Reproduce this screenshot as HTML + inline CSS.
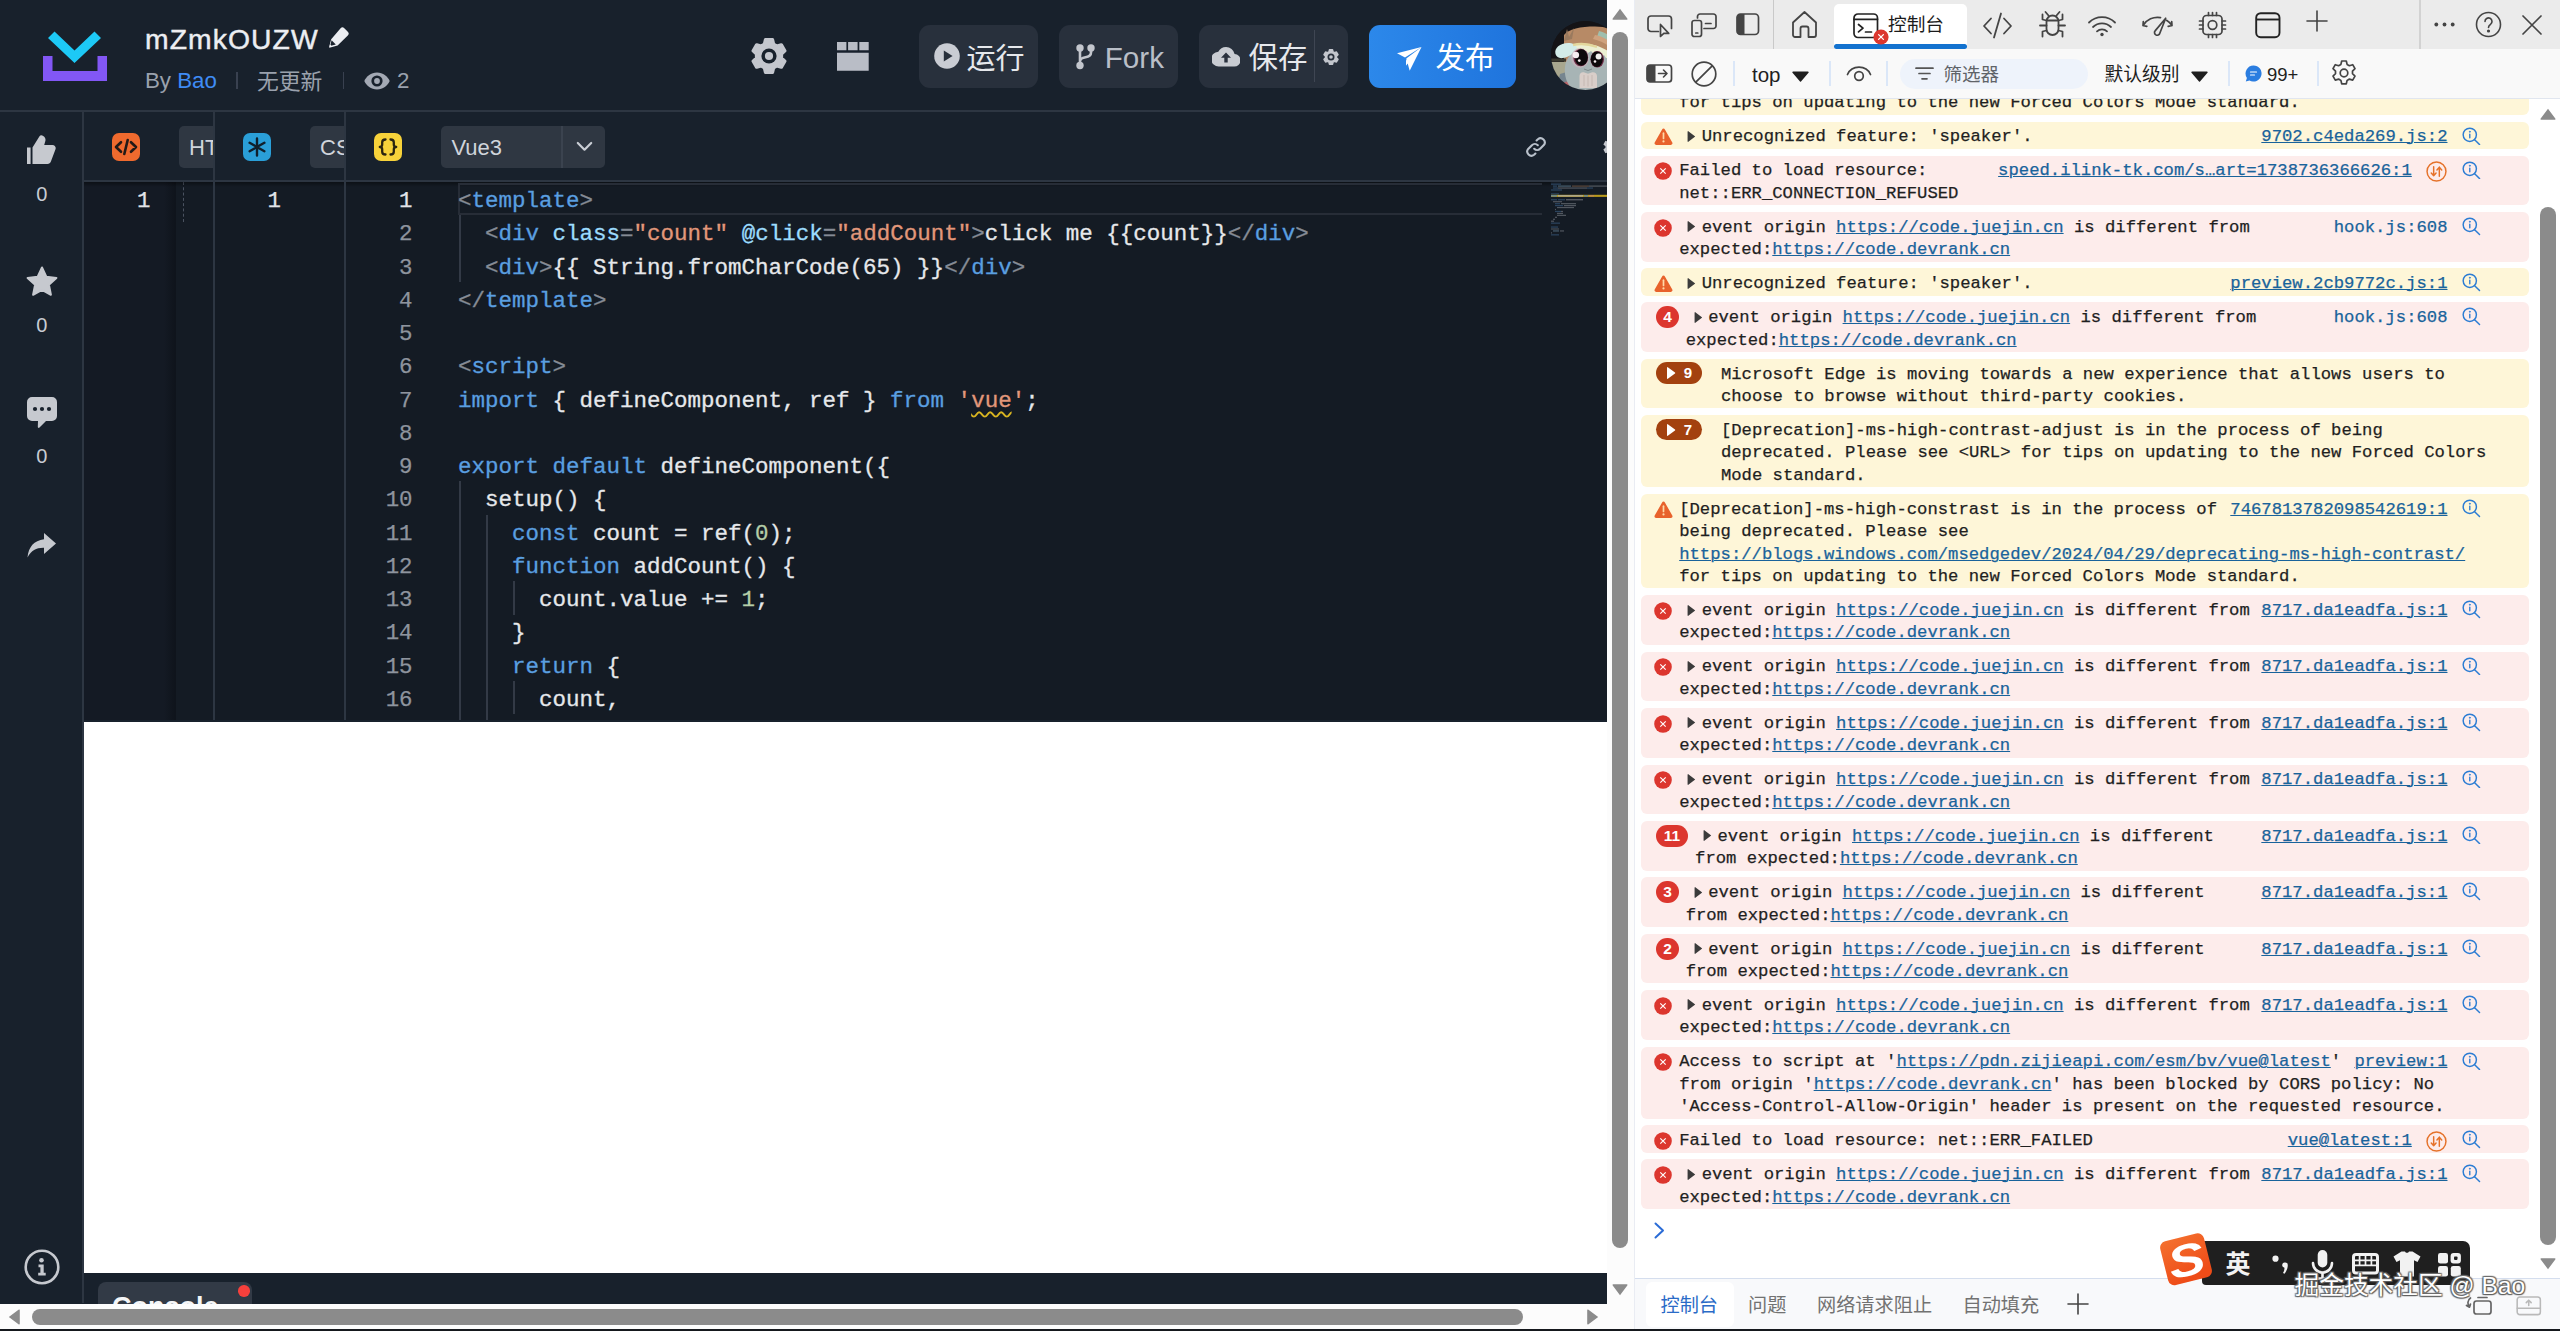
<!DOCTYPE html>
<html lang="zh-CN">
<head>
<meta charset="utf-8">
<title>mZmkOUZW - 码上掘金</title>
<style>
*{box-sizing:border-box;margin:0;padding:0}
html,body{width:2560px;height:1331px;overflow:hidden;background:#fff}
body{position:relative;font-family:"Liberation Sans","Noto Sans CJK SC",sans-serif;color:#d5d8de}
.abs{position:absolute}
svg{display:block}
/* ---------- left app ---------- */
#app{position:absolute;left:0;top:0;width:1607px;height:1304px;background:#18212c;overflow:hidden}
#hdr{position:absolute;left:0;top:0;width:1607px;height:110px;border-bottom:2px solid #2d3642;box-sizing:content-box}
#title{position:absolute;left:145px;top:21px;font-size:28.3px;line-height:36px;color:#eceef2;white-space:nowrap;letter-spacing:1.1px;-webkit-text-stroke:.45px currentColor}
#meta{position:absolute;left:145px;top:66px;font-size:22.3px;line-height:30px;color:#9aa1ad;white-space:nowrap}
#meta .bao{color:#3f8cf5}
.hbtn{position:absolute;top:25px;height:63px;border-radius:11px;background:#28303c;color:#c9cdd4;font-size:30px;line-height:63px;white-space:nowrap}
#side{position:absolute;left:0;top:112px;width:82px;height:1191px;border-right:2px solid #2d3642;box-sizing:content-box}
.scount{position:absolute;left:0.7px;width:82px;text-align:center;font-size:20px;line-height:24px;color:#c8ccd3}
/* tabs row */
#tabs{position:absolute;left:84px;top:112px;width:1523px;height:68px;border-bottom:2px solid #2d3642;box-sizing:content-box}
.vdiv{position:absolute;top:112px;width:2px;height:608px;background:#2d3642;z-index:3}
.licon{position:absolute;top:21px;width:28px;height:28px;border-radius:7px}
.chip{position:absolute;top:14px;height:42px;background:#2f3742;border-radius:5px;color:#d0d4db;font-size:22px;line-height:44px;overflow:hidden;white-space:nowrap}
/* editor */
#ed{position:absolute;left:84px;top:182px;width:1523px;height:538px;background:#141b24;overflow:hidden}
.mono{font-family:"Liberation Mono","DejaVu Sans Mono",monospace}
.ln{-webkit-text-stroke:.250px currentColor;position:absolute;text-align:right;font-size:22.4px;line-height:33.27px;color:#8e949e;white-space:pre}
#code{position:absolute;left:374px;top:3px;-webkit-text-stroke:.300px currentColor;font-size:22.5px;line-height:33.27px;color:#e6e8eb;white-space:pre}
.k{color:#5a9fe0}.t{color:#5a9fe0}.p{color:#858b95}.a{color:#9cdcfe}.s{color:#e2977a}.n{color:#b5cea8}
.sq{text-decoration:underline wavy #d9b520;text-decoration-thickness:1.500px;text-underline-offset:4px}
.guide{position:absolute;width:2px;background:#333a46}
/* preview + bottom */
#pv{position:absolute;left:84px;top:722px;width:1523px;height:551px;background:#fff}
/* scrollbars */
#vsb{position:absolute;left:1607px;top:0;width:27px;height:1304px;background:#fcfcfc}
#hsb{position:absolute;left:0;top:1304px;width:1634px;height:25px;background:#fcfcfc}
#blk{position:absolute;left:0;top:1328.5px;width:2560px;height:2.5px;background:#15181d}
/* ---------- devtools ---------- */
#dt{position:absolute;left:1634px;top:0;width:926px;height:1329px;background:#fff;color:#1f1f1f;overflow:hidden}

#dt .sans{font-family:"Liberation Sans","Noto Sans CJK SC",sans-serif}
#tb1{position:absolute;left:0;top:0;width:926px;height:49px;background:#ebebeb}
#tb2{position:absolute;left:0;top:49px;width:926px;height:50px;background:#f9f9f9;border-bottom:1.5px solid #e1e6ef}
.tsep{position:absolute;top:61px;width:2px;height:25px;background:#dbe7f8}
#con{position:absolute;left:0;top:99px;width:926px;height:1180px;overflow:hidden;background:#fff}
#msgs{position:absolute;left:6.500px;top:-78.600px;width:888.500px}
.m{position:relative;border-radius:6px;margin-bottom:6.8px;padding:4.8px 0 0 0;-webkit-text-stroke:.250px currentColor;font-family:"Liberation Mono","DejaVu Sans Mono",monospace;font-size:17.24px;line-height:22.400px;white-space:pre;color:#1f1f1f}
.m.e{background:#fdeceb}
.m.w{background:#fef6d8}
.m .ic{position:absolute}
.m .tx{position:relative}
.lk{color:#19639b;text-decoration:underline;text-decoration-thickness:1.300px;text-underline-offset:0.8px}
.src{position:absolute;right:81.500px;top:4.8px;color:#19639b;text-decoration:underline;text-decoration-thickness:1.300px;text-underline-offset:0.8px}
.src.nou{text-decoration:none}
.src.wn{right:117.200px}
.arr{display:inline-block;width:22.440px;height:12px;position:relative}
.arr svg{position:absolute;left:8px;top:1.5px}
.bd{position:absolute;left:15.500px;-webkit-text-stroke:0;top:4px;height:22px;border-radius:11px;background:#dc362e;color:#fff;font:bold 15.5px/22px "Liberation Sans",sans-serif;text-align:center}
.yb{position:absolute;left:15.500px;top:3.500px;height:21.500px;width:46px;border-radius:11px;background:#a3410f;color:#fff;-webkit-text-stroke:0;font:bold 15px/21.500px "Liberation Sans",sans-serif;text-align:center;white-space:nowrap}
#csb{position:absolute;left:903px;top:99px;width:23px;height:1180px;background:#fff}
#drawer{position:absolute;left:0;top:1278px;width:926px;height:51px;background:#f8f9fb;border-top:1.5px solid #d5deee}
.dtab{position:absolute;top:13.5px;font-size:19.2px;line-height:26px;color:#727272;white-space:nowrap}
</style>
</head>
<body>
<div id="app">
<div id="hdr">
  <svg class="abs" style="left:43px;top:30px" width="64" height="51" viewBox="0 0 64 51">
    <path d="M0 26h9.5v15h45V26H64v25H0z" fill="#8257f5"/>
    <path d="M11.5 1.5L5 8l26.5 25L58 8l-6.5-6.5-20 19z" fill="#1dc9f6"/>
  </svg>
  <div id="title">mZmkOUZW</div>
  <svg class="abs" style="left:328px;top:27px" width="21" height="21" viewBox="0 0 21 21">
    <path d="M12.6 1.2a2.6 2.6 0 0 1 3.7 0l3.5 3.5a2.6 2.6 0 0 1 0 3.7L9.6 18.6l-7.3 2a.9.9 0 0 1-1.1-1.1l2-7.3z" fill="#eceef2"/>
    <path d="M3.6 13.2l4.2 4.2-4.9 1.4a.5.5 0 0 1-.6-.6z" fill="#18212c"/>
    <path d="M2.2 17.6l1.2 1.2-1.2.4a.3.3 0 0 1-.4-.4z" fill="#eceef2"/>
  </svg>
  <div id="meta">By <span class="bao">Bao</span></div>
  <div class="abs" style="left:236px;top:72px;width:1.5px;height:17px;background:#394150"></div>
  <div class="abs" style="left:257px;top:67px;font-size:21.8px;line-height:30px;color:#9aa1ad;white-space:nowrap">无更新</div>
  <div class="abs" style="left:342.5px;top:72px;width:1.5px;height:17px;background:#394150"></div>
  <svg class="abs" style="left:364px;top:71.5px" width="26" height="18" viewBox="0 0 26 18">
    <path d="M13 0.5C7 0.5 2.4 4.3 0.3 9c2.1 4.700 6.700 8.500 12.700 8.500S23.600 13.700 25.700 9C23.600 4.300 19 0.500 13 0.500z" fill="#a3a9b4"/>
    <circle cx="13" cy="9" r="5.6" fill="#18212c"/>
    <circle cx="13" cy="9" r="2.9" fill="#a3a9b4"/>
  </svg>
  <div class="abs" style="left:397px;top:66px;font-size:22.3px;line-height:30px;color:#9aa1ad">2</div>

  <!-- gear -->
  <svg class="abs" style="left:749.500px;top:37px" width="38" height="38" viewBox="0 0 38 38">
    <path d="M23.52 7.24L22.45 2.76L15.55 2.76L14.48 7.24L11.07 9.21L6.66 7.89L3.21 13.87L6.56 17.03L6.56 20.97L3.21 24.13L6.66 30.11L11.07 28.79L14.48 30.76L15.55 35.24L22.45 35.24L23.52 30.76L26.93 28.79L31.34 30.11L34.79 24.13L31.44 20.97L31.44 17.03L34.79 13.87L31.34 7.89L26.93 9.21Z" fill="#c3c6cd" stroke="#c3c6cd" stroke-width="3.400" stroke-linejoin="round"/>
    <circle cx="19" cy="19" r="7.600" fill="#18212c"/><circle cx="19" cy="19" r="4.100" fill="#c3c6cd"/>
  </svg>
  <!-- layout icon -->
  <svg class="abs" style="left:837px;top:42px" width="32" height="29" viewBox="0 0 32 29">
    <path fill="#b9bdc6" d="M0 0h9.400v8.200H0zM11.100 0h9.500v8.200h-9.500zM22.300 0h9.400v8.200h-9.400zM0 10.800h31.700v18H0z"/>
  </svg>
  <!-- run -->
  <div class="hbtn" style="left:919px;width:119px">
    <svg class="abs" style="left:14.800px;top:18.200px" width="26" height="26" viewBox="0 0 26 26"><circle cx="13" cy="13" r="12.800" fill="#c9ccd3"/><path d="M9.800 7.600v10.800l8.800-5.400z" fill="#28303c"/></svg>
    <span class="abs" style="left:47.5px;top:2.5px;color:#e6e8ec;font-size:29px">运行</span>
  </div>
  <!-- fork -->
  <div class="hbtn" style="left:1059px;width:119px">
    <svg class="abs" style="left:16.500px;top:18.500px" width="19" height="26" viewBox="0 0 19 26">
      <g fill="none" stroke="#c3c6cd" stroke-width="2.600"><path d="M4 6v14M15 6v2.500c0 3-2.500 4.300-5.500 4.800S4 15 4 17.500"/></g>
      <circle cx="4" cy="4" r="3.700" fill="#c3c6cd"/><circle cx="15" cy="4" r="3.700" fill="#c3c6cd"/><circle cx="4" cy="21.500" r="3.700" fill="#c3c6cd"/>
    </svg>
    <span class="abs" style="left:45.8px;top:0.5px;color:#b9bec7;font-size:29.6px">Fork</span>
  </div>
  <!-- save -->
  <div class="hbtn" style="left:1199px;width:149px">
    <svg class="abs" style="left:13px;top:21px" width="28" height="21" viewBox="0 0 28 21">
      <path fill="#c9ccd2" d="M22.600 8A8.700 8.700 0 0 0 14 1a8.700 8.700 0 0 0-7.700 4.700A7 7 0 0 0 7 20.500h15a5.800 5.800 0 0 0 .600-12.500z"/>
      <path fill="#2a313e" d="M14 6.500l-5 5.200h3.300v4.800h3.400v-4.800H19z"/>
    </svg>
    <span class="abs" style="left:49.5px;top:1px;color:#e6e8ec;font-size:29.5px">保存</span>
    <div class="abs" style="left:115px;top:5px;width:1px;height:52px;background:#3f4653"></div>
    <svg class="abs" style="left:122.500px;top:22.800px" width="18" height="18" viewBox="0 0 18 18"><path d="M10.97 3.87L10.52 1.86L7.48 1.86L7.03 3.87L5.54 4.73L3.58 4.12L2.06 6.74L3.57 8.14L3.57 9.86L2.06 11.26L3.58 13.88L5.54 13.27L7.03 14.13L7.48 16.14L10.52 16.14L10.97 14.13L12.46 13.27L14.42 13.88L15.94 11.26L14.43 9.86L14.43 8.14L15.94 6.74L14.42 4.12L12.46 4.73Z" fill="#c3c6cd" stroke="#c3c6cd" stroke-width="1.600" stroke-linejoin="round"/><circle cx="9" cy="9" r="3.500" fill="#28303c"/><circle cx="9" cy="9" r="1.800" fill="#c3c6cd"/></svg>
  </div>
  <!-- publish -->
  <div class="hbtn" style="left:1369px;width:147px;background:linear-gradient(90deg,#2c88ea,#1f74dd)">
    <svg class="abs" style="left:27.500px;top:21.500px" width="25" height="24" viewBox="0 0 25 24"><path fill="#fff" d="M24.500 0L0 6.200l8 4.300zM24.500 0L9.300 11.500l3.400 12.300zM9 12.200v6.500l2.200-3z"/></svg>
    <span class="abs" style="left:66.500px;top:1px;color:#fff;font-size:29.500px">发布</span>
  </div>
  <!-- avatar -->
  <div class="abs" style="left:1550.7px;top:21.3px;width:69px;height:69px;border-radius:50%;overflow:hidden;background:#151417">
    <svg width="69" height="69" viewBox="0 0 69 69" style="filter:blur(.55px)">
      <rect width="69" height="69" fill="#141316"/>
      <path d="M13 41V14C17 8 30 5.500 44 5.500c12 0 20 4 26 10V69H13z" fill="#b78a66"/>
      <path d="M13 20l3-12 2 8 5-9-2 11z" fill="#9a7a5e"/>
      <path d="M48 10c8 2 14 6 20 14v10c-4-8-12-14-22-18z" fill="#9fbfae"/>
      <path d="M44 14c8 1 16 6 24 16v4C60 26 52 20 42 18z" fill="#cfa27e"/>
      <rect x="0" y="37.500" width="15" height="3.200" fill="#3b3a30"/>
      <path d="M0 41h16l6 8-2 20H0z" fill="#a8a78f"/>
      <path d="M9 53l10-3 4 4-8 10-8-2z" fill="#76858f"/>
      <path d="M12 62l8-3 2 6-6 4z" fill="#b9656a"/>
      <path d="M14 46C16 30 30 26 44 28c10 1 20 6 26 14v27H22c-6-6-9-14-8-23z" fill="#a7b4b5"/>
      <path d="M19 24c10-3 26-2 38 6 5 3 9 7 12 11-6-3-10-4-14-4l-2-3-3 2-3-4-3 2-4-4-3 2-5-4-4 2-6-3z" fill="#ecefd2"/>
      <path d="M4.500 33C3 27 9 22 17 22c5 0 8 2 9 5-2 5-8 9-14 10-4 .700-6.500-1-7.500-4z" fill="#d3ece8"/>
      <ellipse cx="29" cy="37" rx="9" ry="10" fill="#c9b2bb" opacity=".7"/>
      <ellipse cx="29.700" cy="36.500" rx="7.400" ry="8.800" fill="#6d2b45"/>
      <ellipse cx="30.300" cy="36.500" rx="6.500" ry="8.300" fill="#0d090b"/>
      <ellipse cx="46.200" cy="38.300" rx="6.800" ry="8.300" fill="#6d2b45"/>
      <ellipse cx="45.800" cy="38.300" rx="6" ry="7.800" fill="#0d090b"/>
      <circle cx="24.800" cy="34" r="3.300" fill="#f6edf0"/><circle cx="28.300" cy="39.600" r="1.400" fill="#f6edf0"/>
      <circle cx="47.600" cy="35.600" r="3" fill="#f2f0ee"/><circle cx="44" cy="40.500" r="1.300" fill="#f6edf0"/>
      <path d="M22 24c8-2 16-1 24 2" stroke="#e3d79c" stroke-width="2.400" fill="none"/>
      <path d="M28.500 55c0-3 2.500-4.500 5-3.500l3.500 1.200 3.500-1.200c2.500-1 5.500.500 5.500 3.500v12h-17.500z" fill="#d9cec9"/>
      <path d="M33 54v11M37 54.500v11M41 54v11" stroke="#c3b5b0" stroke-width=".900"/>
      <path d="M33 48q4 3 8 0" stroke="#7f8b8d" stroke-width="1" fill="none"/>
    </svg>
  </div>
</div>

<div id="side">
  <!-- thumb (coords relative to #side: top = y-112) -->
  <svg class="abs" style="left:27px;top:23px" width="29" height="30" viewBox="0 0 29 30">
    <path fill="#c6c9cf" d="M0 12.500h3.600V29H0z"/>
    <path fill="#c6c9cf" d="M5.500 12.500L12.500 1.200C13.200 0 15 .100 16.200.900c2.300 1.500 2.700 3.300 2 5.600l-1 3.500h8.300c2.400 0 3.800 2.200 3 4.300l-4.600 12.200c-.600 1.600-1.700 2.500-3.400 2.500H5.500z"/>
  </svg>
  <div class="scount" style="top:70px">0</div>
  <svg class="abs" style="left:25.500px;top:154px" width="32" height="31" viewBox="0 0 32 31">
    <path fill="#c6c9cf" stroke="#c6c9cf" stroke-width="2" stroke-linejoin="round" d="M16 1.500l4.300 9.200 10.100 1.200-7.500 6.900 2 10-8.900-5-8.900 5 2-10L1.600 11.900l10.100-1.200z"/>
  </svg>
  <div class="scount" style="top:201px">0</div>
  <svg class="abs" style="left:27px;top:285px" width="30" height="31" viewBox="0 0 30 31">
    <path fill="#c6c9cf" d="M5 0h20a5 5 0 0 1 5 5v14a5 5 0 0 1-5 5h-6l-6.500 6.500c-.800.800-1.800.300-1.700-.800L11 24H5a5 5 0 0 1-5-5V5a5 5 0 0 1 5-5z"/>
    <circle cx="8" cy="12" r="2.100" fill="#18212c"/><circle cx="15" cy="12" r="2.100" fill="#18212c"/><circle cx="22" cy="12" r="2.100" fill="#18212c"/>
  </svg>
  <div class="scount" style="top:332px">0</div>
  <svg class="abs" style="left:27px;top:421px" width="29" height="25" viewBox="0 0 29 25">
    <path fill="#c6c9cf" d="M17 0l12 10.500L17 21v-6.300C9.500 14.500 4.500 17 .500 24.500 1.500 14 7 7.500 17 6.300z"/>
  </svg>
  <!-- info -->
  <svg class="abs" style="left:24px;top:1137px" width="36" height="36" viewBox="0 0 36 36">
    <circle cx="18" cy="18" r="16.300" fill="none" stroke="#c6c9cf" stroke-width="2.600"/>
    <circle cx="17.500" cy="11.200" r="2.300" fill="#c6c9cf"/>
    <path fill="#c6c9cf" d="M14.500 15.500h5.200v8.300h2v2.700h-7.500v-2.700h2.200v-5.600h-1.900z"/>
  </svg>
</div>

<div id="tabs">
  <!-- HTML icon -->
  <div class="licon" style="left:28px;background:#ef6a2e">
    <svg width="28" height="28" viewBox="0 0 28 28" fill="none" stroke="#231a17" stroke-width="2.600" stroke-linecap="round" stroke-linejoin="round"><path d="M9 9.200L4 14l5 4.800M19 9.200l5 4.800-5 4.800M15.700 7l-3.400 14"/></svg>
  </div>
  <div class="chip" style="left:95px;width:34px;padding-left:10px;border-radius:5px 0 0 5px">HTML</div>
  <!-- CSS icon -->
  <div class="licon" style="left:159px;background:#2a9fd8">
    <svg width="28" height="28" viewBox="0 0 28 28" fill="none" stroke="#10202c" stroke-width="2.400" stroke-linecap="round"><path d="M14 5.500v17M6.600 9.800l14.800 8.400M21.400 9.800L6.600 18.200"/></svg>
  </div>
  <div class="chip" style="left:226px;width:34px;padding-left:10px;border-radius:5px 0 0 5px">CSS</div>
  <!-- JS icon -->
  <div class="licon" style="left:290px;background:#f7d23a">
    <svg width="28" height="28" viewBox="0 0 28 28" fill="none" stroke="#2a2410" stroke-width="2.300" stroke-linecap="round" stroke-linejoin="round"><path d="M11.500 6.500c-2.500 0-3.300 1-3.300 2.800v2.200c0 1.500-.800 2.500-2.400 2.500 1.600 0 2.400 1 2.400 2.500v2.200c0 1.800.800 2.800 3.300 2.800M16.500 6.500c2.500 0 3.300 1 3.300 2.800v2.200c0 1.500.800 2.500 2.400 2.500-1.600 0-2.400 1-2.400 2.500v2.200c0 1.800-.800 2.800-3.300 2.800"/></svg>
  </div>
  <div class="chip" style="left:357px;width:164px;padding-left:10.500px">Vue3
    <div class="abs" style="left:120px;top:0;width:2px;height:42px;background:#3b434f"></div>
    <svg class="abs" style="left:135px;top:15px" width="17" height="11" viewBox="0 0 17 11" fill="none" stroke="#c9cdd4" stroke-width="2.200" stroke-linecap="round" stroke-linejoin="round"><path d="M1.800 2l6.700 6.700L15.200 2"/></svg>
  </div>
  <!-- link icon -->
  <svg class="abs" style="left:1441px;top:24px" width="22" height="22" viewBox="0 0 22 22" fill="none" stroke="#b9c1cb" stroke-width="2.100" stroke-linecap="round"><path d="M9.200 12.800a4.200 4.200 0 0 0 5.900 0l3.700-3.700a4.200 4.200 0 0 0-5.900-5.900l-1.300 1.300M12.800 9.200a4.200 4.200 0 0 0-5.900 0l-3.700 3.700a4.200 4.200 0 0 0 5.900 5.900l1.300-1.300"/></svg>
  <!-- clipped gear at right -->
  <svg class="abs" style="left:1517px;top:24px" width="22" height="22" viewBox="0 0 24 24"><path fill="#c6c9cf" d="M19.140 12.940c.040-.300.060-.610.060-.940 0-.320-.020-.640-.070-.940l2.030-1.580a.490.490 0 0 0 .120-.610l-1.920-3.320a.488.488 0 0 0-.590-.220l-2.390.960c-.500-.380-1.030-.700-1.620-.940l-.360-2.540a.484.484 0 0 0-.480-.410h-3.840c-.240 0-.430.170-.470.410l-.360 2.540c-.590.240-1.130.570-1.620.940l-2.390-.960c-.220-.080-.470 0-.590.220L2.740 8.870c-.120.210-.080.470.120.610l2.030 1.580c-.050.300-.090.630-.090.940s.020.640.070.940l-2.030 1.580a.490.490 0 0 0-.120.610l1.920 3.320c.120.220.370.290.590.220l2.390-.960c.500.380 1.030.700 1.620.940l.360 2.540c.050.240.240.410.480.410h3.840c.240 0 .440-.170.470-.410l.360-2.540c.590-.240 1.130-.560 1.620-.940l2.390.960c.220.080.470 0 .590-.220l1.920-3.320c.120-.220.070-.470-.120-.610l-2.010-1.580zM12 15.600c-1.980 0-3.600-1.620-3.600-3.600s1.620-3.600 3.600-3.600 3.600 1.620 3.600 3.600-1.620 3.600-3.600 3.600z"/></svg>
</div>
<div class="vdiv" style="left:213px"></div>
<div class="vdiv" style="left:344px"></div>

<div id="ed">
  <div class="abs" style="left:0;top:0;width:92px;height:538px;background:#141a24"></div>
  <div class="abs" style="left:80px;top:0;width:12px;height:538px;background:linear-gradient(90deg,rgba(10,14,20,0),rgba(10,14,20,.55))"></div>
  <div class="abs" style="left:99px;top:0;width:0;height:40px;border-left:1.500px dashed #4a5260"></div>
  <div class="ln mono" style="left:0;top:3px;width:66.500px;color:#e2e4e8">1</div>
  <div class="ln mono" style="left:131px;top:3px;width:66px;color:#e2e4e8">1</div>
  <div class="ln mono" id="lns" style="left:262px;top:3px;width:66.500px"><span style="color:#e2e4e8">1</span>
2
3
4
5
6
7
8
9
10
11
12
13
14
15
16
17</div>
  <div class="abs" style="left:0;top:0;width:1523px;height:5px;background:linear-gradient(180deg,rgba(0,0,0,.4),rgba(0,0,0,0))"></div>
  <div class="abs" style="left:374px;top:1px;width:1084px;height:32px;border:2px solid #272d37;border-right:none"></div>
  <div class="guide" style="left:375px;top:33.27px;height:66.54px"></div><div class="guide" style="left:375px;top:299.43px;height:266.16px"></div><div class="guide" style="left:402px;top:332.7px;height:232.89px"></div><div class="guide" style="left:429px;top:399.24px;height:33.27px"></div><div class="guide" style="left:429px;top:499.05px;height:33.27px"></div>
  <div id="code" class="mono"><span class="p">&lt;</span><span class="t">template</span><span class="p">&gt;</span>
  <span class="p">&lt;</span><span class="t">div</span> <span class="a">class</span><span class="p">=</span><span class="s">"count"</span> <span class="a">@click</span><span class="p">=</span><span class="s">"addCount"</span><span class="p">&gt;</span>click me {{count}}<span class="p">&lt;/</span><span class="t">div</span><span class="p">&gt;</span>
  <span class="p">&lt;</span><span class="t">div</span><span class="p">&gt;</span>{{ String.fromCharCode(65) }}<span class="p">&lt;/</span><span class="t">div</span><span class="p">&gt;</span>
<span class="p">&lt;/</span><span class="t">template</span><span class="p">&gt;</span>

<span class="p">&lt;</span><span class="t">script</span><span class="p">&gt;</span>
<span class="k">import</span> { defineComponent, ref } <span class="k">from</span> <span class="s">'<span class="sq">vue</span>'</span>;

<span class="k">export</span> <span class="k">default</span> defineComponent({
  setup() {
    <span class="k">const</span> count = ref(<span class="n">0</span>);
    <span class="k">function</span> addCount() {
      count.value += <span class="n">1</span>;
    }
    <span class="k">return</span> {
      count,
    };</div>
  <!-- minimap -->
  <div class="abs" style="left:1467px;top:0;width:56px;height:538px;background:#141b24"></div>
  <svg class="abs" style="left:1467px;top:0" width="56" height="60" viewBox="0 0 56 60"><rect x="0.0" y="1.55" width="10.0" height="1.2" fill="#4d7fb3" opacity="0.42"/><rect x="2.0" y="3.50" width="4.0" height="1.2" fill="#4d7fb3" opacity="0.42"/><rect x="7.0" y="3.50" width="13.0" height="1.2" fill="#8fb9d4" opacity="0.42"/><rect x="21.0" y="3.50" width="17.0" height="1.2" fill="#c2865e" opacity="0.42"/><rect x="38.0" y="3.50" width="18.0" height="1.2" fill="#a8acb3" opacity="0.42"/><rect x="2.0" y="5.45" width="5.0" height="1.2" fill="#4d7fb3" opacity="0.42"/><rect x="7.0" y="5.45" width="29.0" height="1.2" fill="#a8acb3" opacity="0.42"/><rect x="36.0" y="5.45" width="6.0" height="1.2" fill="#4d7fb3" opacity="0.42"/><rect x="0.0" y="7.40" width="11.0" height="1.2" fill="#4d7fb3" opacity="0.42"/><rect x="0.0" y="11.30" width="8.0" height="1.2" fill="#4d7fb3" opacity="0.42"/><rect x="0" y="12.80" width="56" height="2.1" fill="#b89a1c"/><rect x="0.0" y="13.25" width="6.0" height="1.2" fill="#4d7fb3" opacity="0.95"/><rect x="7.0" y="13.25" width="25.0" height="1.2" fill="#a8acb3" opacity="0.95"/><rect x="33.0" y="13.25" width="4.0" height="1.2" fill="#4d7fb3" opacity="0.95"/><rect x="38.0" y="13.25" width="5.0" height="1.2" fill="#c2865e" opacity="0.95"/><rect x="0.0" y="17.15" width="6.0" height="1.2" fill="#4d7fb3" opacity="0.42"/><rect x="7.0" y="17.15" width="7.0" height="1.2" fill="#4d7fb3" opacity="0.42"/><rect x="15.0" y="17.15" width="17.0" height="1.2" fill="#c5c8ce" opacity="0.42"/><rect x="2.0" y="19.10" width="9.0" height="1.2" fill="#a8acb3" opacity="0.42"/><rect x="4.0" y="21.05" width="5.0" height="1.2" fill="#4d7fb3" opacity="0.42"/><rect x="10.0" y="21.05" width="15.0" height="1.2" fill="#a8acb3" opacity="0.42"/><rect x="4.0" y="23.00" width="8.0" height="1.2" fill="#4d7fb3" opacity="0.42"/><rect x="13.0" y="23.00" width="12.0" height="1.2" fill="#a8acb3" opacity="0.42"/><rect x="6.0" y="24.95" width="17.0" height="1.2" fill="#a8acb3" opacity="0.42"/><rect x="4.0" y="26.90" width="1.0" height="1.2" fill="#a8acb3" opacity="0.42"/><rect x="4.0" y="28.85" width="6.0" height="1.2" fill="#4d7fb3" opacity="0.42"/><rect x="10.0" y="28.85" width="2.0" height="1.2" fill="#a8acb3" opacity="0.42"/><rect x="6.0" y="30.80" width="6.0" height="1.2" fill="#a8acb3" opacity="0.42"/><rect x="6.0" y="32.75" width="9.0" height="1.2" fill="#a8acb3" opacity="0.42"/><rect x="4.0" y="34.70" width="2.0" height="1.2" fill="#a8acb3" opacity="0.42"/><rect x="2.0" y="36.65" width="2.0" height="1.2" fill="#a8acb3" opacity="0.42"/><rect x="0.0" y="38.60" width="3.0" height="1.2" fill="#a8acb3" opacity="0.42"/><rect x="0.0" y="40.55" width="9.0" height="1.2" fill="#4d7fb3" opacity="0.42"/><rect x="0.0" y="44.45" width="7.0" height="1.2" fill="#4d7fb3" opacity="0.42"/><rect x="0.0" y="46.40" width="8.0" height="1.2" fill="#8d949e" opacity="0.42"/><rect x="2.0" y="48.35" width="6.0" height="1.2" fill="#8fb9d4" opacity="0.42"/><rect x="9.0" y="48.35" width="4.0" height="1.2" fill="#a8acb3" opacity="0.42"/><rect x="0.0" y="50.30" width="1.0" height="1.2" fill="#a8acb3" opacity="0.42"/><rect x="0.0" y="52.25" width="8.0" height="1.2" fill="#4d7fb3" opacity="0.42"/></svg>
  
</div>
<div id="pv"></div>
<div class="abs" style="left:98px;top:1282px;width:154px;height:40px;border-radius:8px;background:#323a46"></div>
<div class="abs" style="left:112px;top:1289.5px;font-size:27px;line-height:34px;font-weight:bold;color:#f4f5f7;white-space:nowrap">Console <span style="font-size:15px;position:relative;top:-1px">▲</span></div>
<div class="abs" style="left:238px;top:1285px;width:11.500px;height:11.500px;border-radius:50%;background:#f6403c"></div>

</div>
<div id="vsb">
  <svg class="abs" style="left:5px;top:8px" width="16" height="12" viewBox="0 0 16 12"><path d="M8 0.800L15.300 10.500a.800.800 0 0 1-.700 1.300H1.400a.800.800 0 0 1-.700-1.300z" fill="#8b8b8b"/></svg>
  <div class="abs" style="left:5px;top:32px;width:16px;height:1216px;border-radius:8px;background:#8b8b8b"></div>
  <svg class="abs" style="left:5px;top:1284px" width="16" height="12" viewBox="0 0 16 12"><path d="M8 11.200L15.300 1.500a.800.800 0 0 0-.700-1.300H1.400a.800.800 0 0 0-.700 1.300z" fill="#8b8b8b"/></svg>
</div>
<div id="hsb">
  <svg class="abs" style="left:8px;top:5px" width="12" height="16" viewBox="0 0 12 16"><path d="M0.800 8L10.500 0.700a.800.800 0 0 1 1.300.700v13.200a.800.800 0 0 1-1.300.700z" fill="#8b8b8b"/></svg>
  <div class="abs" style="left:32px;top:5px;width:1491px;height:16px;border-radius:8px;background:#8b8b8b"></div>
  <svg class="abs" style="left:1587px;top:5px" width="12" height="16" viewBox="0 0 12 16"><path d="M11.200 8L1.500 0.700a.800.800 0 0 0-1.300.700v13.200a.800.800 0 0 0 1.300.700z" fill="#8b8b8b"/></svg>
</div>

<div id="dt">
<div class="abs" style="left:0;top:0;width:1px;height:1329px;background:#e9ecf3;z-index:5"></div>
<div id="tb1" class="sans">
  <!-- inspect -->
  <svg class="abs" style="left:12px;top:14px" width="28" height="25" viewBox="0 0 28 25" fill="none" stroke="#444" stroke-width="1.700" stroke-linejoin="round" stroke-linecap="round"><path d="M12.500 17.500H5a3 3 0 0 1-3-3V5a3 3 0 0 1 3-3h17.500a3 3 0 0 1 3 3v9.500"/><path d="M14.500 10.500v12l3.300-3.100h4.900z" fill="#ebebeb"/></svg>
  <!-- device -->
  <svg class="abs" style="left:56px;top:12px" width="28" height="26" viewBox="0 0 28 26" fill="none" stroke="#444" stroke-width="1.700" stroke-linejoin="round" stroke-linecap="round"><path d="M7.500 6V4.500a2.500 2.500 0 0 1 2.500-2.500h13.500a2.500 2.500 0 0 1 2.500 2.500V14a2.500 2.500 0 0 1-2.500 2.500H14"/><rect x="2" y="8.500" width="9.500" height="16" rx="2.300"/><path d="M5.800 21h2M15.500 11.500h5.500"/></svg>
  <!-- sidebar -->
  <svg class="abs" style="left:102px;top:13px" width="24" height="23" viewBox="0 0 24 23"><rect x="1" y="1" width="21.500" height="20.500" rx="3.500" fill="none" stroke="#444" stroke-width="1.700"/><path d="M4.500 1h4v20.500h-4a3.500 3.500 0 0 1-3.500-3.500V4.500A3.500 3.500 0 0 1 4.500 1z" fill="#444"/></svg>
  <div class="abs" style="left:138.500px;top:0;width:1.500px;height:49px;background:#c9c9c9"></div>
  <!-- home -->
  <svg class="abs" style="left:157px;top:10px" width="27" height="29" viewBox="0 0 27 29" fill="none" stroke="#444" stroke-width="1.800" stroke-linejoin="round"><path d="M2 12.500L13.500 2 25 12.500V25a2 2 0 0 1-2 2h-5.500v-8.500a2 2 0 0 0-2-2h-4a2 2 0 0 0-2 2V27H4a2 2 0 0 1-2-2z"/></svg>
  <!-- active tab -->
  <div class="abs" style="left:200px;top:3.500px;width:133px;height:45.500px;background:#fff;border-radius:5px 5px 0 0"></div>
  <div class="abs" style="left:200px;top:44px;width:133px;height:4.500px;background:#1372cf;border-radius:2.500px"></div>
  <svg class="abs" style="left:219px;top:12.500px" width="26" height="26" viewBox="0 0 26 26" fill="none" stroke="#222" stroke-width="1.700" stroke-linejoin="round" stroke-linecap="round"><rect x="1" y="1" width="23.500" height="23.500" rx="4"/><path d="M1 6.300h23.500M5.500 11.500l4.500 3.700-4.500 3.700M12.500 19h6"/></svg>
  <svg class="abs" style="left:239px;top:29px" width="16" height="16" viewBox="0 0 16 16"><circle cx="8" cy="8" r="7.600" fill="#dc362e"/><path d="M5.600 5.600L10.400 10.400M10.400 5.600L5.600 10.400" stroke="#fff" stroke-width="1.300" stroke-linecap="round" fill="none"/></svg>
  <div class="abs" style="left:254px;top:12px;font-size:18.700px;line-height:26px;color:#1b1b1b;white-space:nowrap">控制台</div>
  <!-- sources </> -->
  <svg class="abs" style="left:348px;top:12px" width="31" height="27" viewBox="0 0 31 27" fill="none" stroke="#444" stroke-width="1.800" stroke-linejoin="round" stroke-linecap="round"><path d="M9 6.500L2 14l7 7.500M22 6.500l7 7.500-7 7.500M19 1.500l-7 24"/></svg>
  <!-- bug -->
  <svg class="abs" style="left:404px;top:10px" width="29" height="29" viewBox="0 0 29 29" fill="none" stroke="#444" stroke-width="1.800" stroke-linejoin="round" stroke-linecap="round"><path d="M8.500 11.500a6 6 0 0 1 12 0v7.500a6 6 0 0 1-12 0z"/><path d="M8.500 10.500h12M10.500 5.500L7.500 2M18.500 5.500l3-3.500M8.500 15.500H2M20.500 15.500H27M8.500 20.500l-4 1v5M20.500 20.500l4 1v5M8.500 10.500l-4-1V4.500M20.500 10.500l4-1V4.500"/></svg>
  <!-- wifi -->
  <svg class="abs" style="left:453px;top:14px" width="30" height="23" viewBox="0 0 30 23" fill="none" stroke="#444" stroke-width="1.800" stroke-linecap="round"><path d="M2 8.500a18.500 18.500 0 0 1 26 0M6 13a13 13 0 0 1 18 0M10 17.300a7.200 7.200 0 0 1 10 0"/><circle cx="15" cy="20.500" r="1.700" fill="#444" stroke="none"/></svg>
  <!-- performance -->
  <svg class="abs" style="left:507px;top:13px" width="33" height="25" viewBox="0 0 33 25" fill="none" stroke="#444" stroke-width="1.700" stroke-linecap="round" stroke-linejoin="round"><path d="M2 12.500A17 17 0 0 1 19.500 4.600M25.500 7.300a17 17 0 0 1 5.500 5.200M2 12.500l.300-4M2 12.500l3.800.800M31 12.500l-3.800.800M31 12.500l-.300-4"/><path d="M24.700 5.200L14.300 17.600a2.700 2.700 0 1 0 4.500 2.600z"/></svg>
  <!-- memory -->
  <svg class="abs" style="left:563px;top:11px" width="31" height="28" viewBox="0 0 31 28" fill="none" stroke="#444" stroke-width="1.700" stroke-linecap="round" stroke-linejoin="round"><rect x="6" y="4.500" width="19" height="19" rx="3.500"/><circle cx="15.500" cy="14" r="4.300"/><path d="M11.500 4.500V1.500M15.500 4.500V1.500M19.500 4.500V1.500M11.500 26.500v-3M15.500 26.500v-3M19.500 26.500v-3M6 10H2.500M6 14H2.500M6 18H2.500M25 10h3.500M25 14h3.500M25 18h3.500"/></svg>
  <!-- application -->
  <svg class="abs" style="left:621px;top:12px" width="26" height="27" viewBox="0 0 26 27" fill="none" stroke="#222" stroke-width="1.900" stroke-linejoin="round"><rect x="1.200" y="1.200" width="23.300" height="24" rx="4.500"/><path d="M1.200 7.500h23.300"/></svg>
  <!-- plus -->
  <svg class="abs" style="left:672px;top:10px" width="22" height="22" viewBox="0 0 22 22" stroke="#444" stroke-width="1.600" stroke-linecap="round"><path d="M11 1v20M1 11h20"/></svg>
  <div class="abs" style="left:785px;top:0;width:1.500px;height:49px;background:#d2d2d2"></div>
  <!-- dots -->
  <svg class="abs" style="left:800px;top:22px" width="21" height="5" viewBox="0 0 21 5" fill="#444"><circle cx="2.300" cy="2.500" r="1.900"/><circle cx="10.500" cy="2.500" r="1.900"/><circle cx="18.700" cy="2.500" r="1.900"/></svg>
  <!-- help -->
  <svg class="abs" style="left:841px;top:11px" width="27" height="27" viewBox="0 0 27 27" fill="none" stroke="#444" stroke-width="1.600" stroke-linecap="round"><circle cx="13.500" cy="13.500" r="12"/><path d="M10 10.500a3.500 3.500 0 1 1 5.500 2.800c-1.300 1-2 1.700-2 3.200"/><circle cx="13.500" cy="20" r=".800" fill="#444"/></svg>
  <!-- close -->
  <svg class="abs" style="left:888px;top:15px" width="20" height="20" viewBox="0 0 20 20" stroke="#444" stroke-width="1.700" stroke-linecap="round"><path d="M1 1l18 18M19 1L1 19"/></svg>
</div>
<div id="tb2" class="sans">
  <svg class="abs" style="left:12px;top:15px" width="27" height="19" viewBox="0 0 27 19"><rect x="1" y="1" width="24.500" height="17" rx="3" fill="none" stroke="#444" stroke-width="1.700"/><path d="M4 1h5.500v17H4a3 3 0 0 1-3-3V4a3 3 0 0 1 3-3z" fill="#444"/><path d="M12.500 9.500h8.500M17.500 6l3.500 3.500-3.500 3.500" fill="none" stroke="#444" stroke-width="1.600" stroke-linecap="round" stroke-linejoin="round"/></svg>
  <svg class="abs" style="left:56.500px;top:11.500px" width="26" height="26" viewBox="0 0 26 26" fill="none" stroke="#444" stroke-width="1.700" stroke-linecap="round"><circle cx="13" cy="13" r="11.800"/><path d="M4.800 21.200L21.200 4.800"/></svg>
  <div class="tsep" style="left:98.500px;top:12px"></div>
  <div class="abs" style="left:118px;top:11.500px;font-size:20.500px;line-height:28px;color:#1f1f1f">top</div>
  <svg class="abs" style="left:157.500px;top:22px" width="17" height="11" viewBox="0 0 17 11"><path d="M1 .500h15a.700.700 0 0 1 .500 1.200L9 10.500a.700.700 0 0 1-1 0L.500 1.700A.700.700 0 0 1 1 .500z" fill="#1f1f1f"/></svg>
  <div class="tsep" style="left:194.500px;top:12px"></div>
  <svg class="abs" style="left:212px;top:17px" width="26" height="16" viewBox="0 0 26 16" fill="none" stroke="#444" stroke-width="1.700" stroke-linecap="round"><path d="M1.500 8.500C3.500 4 8 1.200 13 1.200S22.500 4 24.500 8.500"/><circle cx="13" cy="10" r="4.300"/></svg>
  <div class="tsep" style="left:252px;top:12px"></div>
  <div class="abs" style="left:266px;top:9.500px;width:187.500px;height:30px;border-radius:15px;background:#eef3fb"></div>
  <svg class="abs" style="left:281px;top:18px" width="19" height="13" viewBox="0 0 19 13" stroke="#555" stroke-width="1.700" stroke-linecap="round"><path d="M1 1.200h17M4 6.500h11M7 11.800h5"/></svg>
  <div class="abs" style="left:309.500px;top:12.500px;font-size:18.500px;line-height:26px;color:#5f6368;white-space:nowrap">筛选器</div>
  <div class="abs" style="left:470.500px;top:12.500px;font-size:18.800px;line-height:26px;color:#1f1f1f;white-space:nowrap">默认级别</div>
  <svg class="abs" style="left:557px;top:22px" width="17" height="11" viewBox="0 0 17 11"><path d="M1 .500h15a.700.700 0 0 1 .500 1.200L9 10.500a.700.700 0 0 1-1 0L.500 1.700A.700.700 0 0 1 1 .500z" fill="#1f1f1f"/></svg>
  <div class="tsep" style="left:594px;top:12px"></div>
  <svg class="abs" style="left:611px;top:16px" width="17" height="17" viewBox="0 0 17 17"><path d="M8.500 0.500a8 8 0 1 1-4 14.900L.800 16.500l1.100-3.600A8 8 0 0 1 8.500.500z" fill="#2b7de0"/><path d="M5.500 7h6M5.500 10h4" stroke="#fff" stroke-width="1.200" stroke-linecap="round"/></svg>
  <div class="abs" style="left:633px;top:11.500px;font-size:18.500px;line-height:28px;color:#1f1f1f">99+</div>
  <div class="tsep" style="left:683px;top:12px"></div>
  <svg class="abs" style="left:696px;top:10px" width="28" height="28" viewBox="0 0 28 28" fill="none" stroke="#444" stroke-width="1.700" stroke-linejoin="round"><path d="M11.700 2h4.600l.800 3.400 2.300 1.300 3.300-1 2.300 4-2.500 2.400v2.600l2.500 2.400-2.300 4-3.300-1-2.300 1.300-.800 3.400h-4.600l-.800-3.400-2.300-1.300-3.300 1-2.300-4 2.500-2.400v-2.600L3 9.700l2.300-4 3.300 1 2.300-1.300z"/><circle cx="14" cy="14" r="3.800"/></svg>
</div>
<div id="con"><div id="msgs"><div class="m w"><div class="tx" style="padding-left:38.7px">&nbsp;<br>&nbsp;<br>&nbsp;<br>for tips on updating to the new Forced Colors Mode standard.</div></div>
<div class="m w"><svg class="ic" style="left:13.500px;top:6.500px" width="19" height="17" viewBox="0 0 19 17"><path d="M9.500 0.600c.600 0 1.100.300 1.400.900l7.400 13.100c.600 1.100-.100 2.300-1.400 2.300H2.100c-1.300 0-2-1.200-1.400-2.300L8.100 1.500c.300-.600.800-.900 1.400-.900z" fill="#e8622c"/><path d="M9.500 5.200v5.300" stroke="#ffd9a8" stroke-width="1.700" stroke-linecap="round"/><circle cx="9.500" cy="13.400" r="1.100" fill="#ffd9a8"/></svg><a class="src">9702.c4eda269.js:2</a><svg class="ic" style="left:821.5px;top:5px" width="18.5" height="18.5" viewBox="0 0 19 19" fill="none" stroke="#2b7cd3" stroke-width="1.500" stroke-linecap="round"><circle cx="8" cy="8" r="6.800"/><path d="M13 13l5 5"/><path d="M8 7.300v3.800" stroke-width="1.400"/><circle cx="8" cy="4.900" r=".500" fill="#2b7cd3" stroke-width=".800"/></svg><div class="tx" style="padding-left:38.7px"><span class="arr"><svg width="8.5" height="11" viewBox="0 0 9 12"><path d="M0.500 0.600v10.800a.500.500 0 0 0 .800.400l7.200-5.400a.500.500 0 0 0 0-.800L1.300.200a.500.500 0 0 0-.800.400z" fill="#3b3b3b"/></svg></span>Unrecognized feature: 'speaker'.</div></div>
<div class="m e"><svg class="ic" style="left:13.500px;top:6.500px" width="18" height="18" viewBox="0 0 18 18"><circle cx="9" cy="9" r="8.800" fill="#dc362e"/><path d="M6.300 6.300L11.700 11.700M11.700 6.300L6.300 11.700" stroke="#fff" stroke-width="1.150" stroke-linecap="butt" fill="none"/></svg><svg class="ic net" style="left:785px;top:5.500px" width="21" height="21" viewBox="0 0 20 20" fill="none" stroke="#e5722a" stroke-width="1.400" stroke-linecap="round" stroke-linejoin="round"><circle cx="10" cy="10" r="9"/><path d="M7.300 5.500v8.500M7.300 14l-2.300-2.500M7.300 14l2.300-2.500M12.700 14.500V6M12.700 6l-2.300 2.500M12.700 6l2.300 2.500"/></svg><a class="src wn">speed.ilink-tk.com/s…art=1738736366626:1</a><svg class="ic" style="left:821.5px;top:5px" width="18.5" height="18.5" viewBox="0 0 19 19" fill="none" stroke="#2b7cd3" stroke-width="1.500" stroke-linecap="round"><circle cx="8" cy="8" r="6.800"/><path d="M13 13l5 5"/><path d="M8 7.300v3.800" stroke-width="1.400"/><circle cx="8" cy="4.900" r=".500" fill="#2b7cd3" stroke-width=".800"/></svg><div class="tx" style="padding-left:38.7px">Failed to load resource:<br>net::ERR_CONNECTION_REFUSED</div></div>
<div class="m e"><svg class="ic" style="left:13.500px;top:6.500px" width="18" height="18" viewBox="0 0 18 18"><circle cx="9" cy="9" r="8.800" fill="#dc362e"/><path d="M6.300 6.300L11.700 11.700M11.700 6.300L6.300 11.700" stroke="#fff" stroke-width="1.150" stroke-linecap="butt" fill="none"/></svg><a class="src nou">hook.js:608</a><svg class="ic" style="left:821.5px;top:5px" width="18.5" height="18.5" viewBox="0 0 19 19" fill="none" stroke="#2b7cd3" stroke-width="1.500" stroke-linecap="round"><circle cx="8" cy="8" r="6.800"/><path d="M13 13l5 5"/><path d="M8 7.300v3.800" stroke-width="1.400"/><circle cx="8" cy="4.900" r=".500" fill="#2b7cd3" stroke-width=".800"/></svg><div class="tx" style="padding-left:38.7px"><span class="arr"><svg width="8.5" height="11" viewBox="0 0 9 12"><path d="M0.500 0.600v10.800a.500.500 0 0 0 .800.400l7.200-5.400a.500.500 0 0 0 0-.800L1.300.200a.500.500 0 0 0-.800.400z" fill="#3b3b3b"/></svg></span>event origin <a class="lk">https://code.juejin.cn</a> is different from<br>expected:<a class="lk">https://code.devrank.cn</a></div></div>
<div class="m w"><svg class="ic" style="left:13.500px;top:6.500px" width="19" height="17" viewBox="0 0 19 17"><path d="M9.500 0.600c.600 0 1.100.300 1.400.900l7.400 13.100c.600 1.100-.100 2.300-1.400 2.300H2.100c-1.300 0-2-1.200-1.400-2.300L8.100 1.500c.300-.600.800-.900 1.400-.900z" fill="#e8622c"/><path d="M9.500 5.200v5.300" stroke="#ffd9a8" stroke-width="1.700" stroke-linecap="round"/><circle cx="9.500" cy="13.400" r="1.100" fill="#ffd9a8"/></svg><a class="src">preview.2cb9772c.js:1</a><svg class="ic" style="left:821.5px;top:5px" width="18.5" height="18.5" viewBox="0 0 19 19" fill="none" stroke="#2b7cd3" stroke-width="1.500" stroke-linecap="round"><circle cx="8" cy="8" r="6.800"/><path d="M13 13l5 5"/><path d="M8 7.300v3.800" stroke-width="1.400"/><circle cx="8" cy="4.900" r=".500" fill="#2b7cd3" stroke-width=".800"/></svg><div class="tx" style="padding-left:38.7px"><span class="arr"><svg width="8.5" height="11" viewBox="0 0 9 12"><path d="M0.500 0.600v10.800a.500.500 0 0 0 .800.400l7.200-5.400a.500.500 0 0 0 0-.800L1.300.200a.500.500 0 0 0-.800.400z" fill="#3b3b3b"/></svg></span>Unrecognized feature: 'speaker'.</div></div>
<div class="m e"><span class="bd" style="width:23px">4</span><a class="src nou">hook.js:608</a><svg class="ic" style="left:821.5px;top:5px" width="18.5" height="18.5" viewBox="0 0 19 19" fill="none" stroke="#2b7cd3" stroke-width="1.500" stroke-linecap="round"><circle cx="8" cy="8" r="6.800"/><path d="M13 13l5 5"/><path d="M8 7.300v3.800" stroke-width="1.400"/><circle cx="8" cy="4.900" r=".500" fill="#2b7cd3" stroke-width=".800"/></svg><div class="tx" style="padding-left:45.2px"><span class="arr"><svg width="8.5" height="11" viewBox="0 0 9 12"><path d="M0.500 0.600v10.800a.500.500 0 0 0 .800.400l7.200-5.400a.500.500 0 0 0 0-.800L1.300.200a.500.500 0 0 0-.800.400z" fill="#3b3b3b"/></svg></span>event origin <a class="lk">https://code.juejin.cn</a> is different from<br>expected:<a class="lk">https://code.devrank.cn</a></div></div>
<div class="m w"><span class="yb"><svg width="10" height="12" viewBox="0 0 9 12" style="display:inline-block;vertical-align:-1px;margin-right:8px"><path d="M0.500 0.600v10.800a.500.500 0 0 0 .800.400l7.200-5.400a.500.500 0 0 0 0-.800L1.300.200a.500.500 0 0 0-.800.400z" fill="#fff"/></svg>9</span><div class="tx" style="padding-left:80.4px">Microsoft Edge is moving towards a new experience that allows users to<br>choose to browse without third-party cookies.</div></div>
<div class="m w"><span class="yb"><svg width="10" height="12" viewBox="0 0 9 12" style="display:inline-block;vertical-align:-1px;margin-right:8px"><path d="M0.500 0.600v10.800a.500.500 0 0 0 .800.400l7.200-5.400a.500.500 0 0 0 0-.800L1.300.200a.500.500 0 0 0-.800.400z" fill="#fff"/></svg>7</span><div class="tx" style="padding-left:80.4px">[Deprecation]-ms-high-contrast-adjust is in the process of being<br>deprecated. Please see &lt;URL&gt; for tips on updating to the new Forced Colors<br>Mode standard.</div></div>
<div class="m w"><svg class="ic" style="left:13.500px;top:6.500px" width="19" height="17" viewBox="0 0 19 17"><path d="M9.500 0.600c.600 0 1.100.300 1.400.900l7.400 13.100c.600 1.100-.100 2.300-1.400 2.300H2.100c-1.300 0-2-1.200-1.400-2.300L8.100 1.500c.300-.600.800-.900 1.400-.900z" fill="#e8622c"/><path d="M9.500 5.200v5.300" stroke="#ffd9a8" stroke-width="1.700" stroke-linecap="round"/><circle cx="9.500" cy="13.400" r="1.100" fill="#ffd9a8"/></svg><a class="src">7467813782098542619:1</a><svg class="ic" style="left:821.5px;top:5px" width="18.5" height="18.5" viewBox="0 0 19 19" fill="none" stroke="#2b7cd3" stroke-width="1.500" stroke-linecap="round"><circle cx="8" cy="8" r="6.800"/><path d="M13 13l5 5"/><path d="M8 7.300v3.800" stroke-width="1.400"/><circle cx="8" cy="4.900" r=".500" fill="#2b7cd3" stroke-width=".800"/></svg><div class="tx" style="padding-left:38.7px">[Deprecation]-ms-high-constrast is in the process of<br>being deprecated. Please see<br><a class="lk">https://blogs.windows.com/msedgedev/2024/04/29/deprecating-ms-high-contrast/</a><br>for tips on updating to the new Forced Colors Mode standard.</div></div>
<div class="m e"><svg class="ic" style="left:13.500px;top:6.500px" width="18" height="18" viewBox="0 0 18 18"><circle cx="9" cy="9" r="8.800" fill="#dc362e"/><path d="M6.300 6.300L11.700 11.700M11.700 6.300L6.300 11.700" stroke="#fff" stroke-width="1.150" stroke-linecap="butt" fill="none"/></svg><a class="src">8717.da1eadfa.js:1</a><svg class="ic" style="left:821.5px;top:5px" width="18.5" height="18.5" viewBox="0 0 19 19" fill="none" stroke="#2b7cd3" stroke-width="1.500" stroke-linecap="round"><circle cx="8" cy="8" r="6.800"/><path d="M13 13l5 5"/><path d="M8 7.300v3.800" stroke-width="1.400"/><circle cx="8" cy="4.900" r=".500" fill="#2b7cd3" stroke-width=".800"/></svg><div class="tx" style="padding-left:38.7px"><span class="arr"><svg width="8.5" height="11" viewBox="0 0 9 12"><path d="M0.500 0.600v10.800a.500.500 0 0 0 .800.400l7.200-5.400a.500.500 0 0 0 0-.800L1.300.200a.500.500 0 0 0-.800.400z" fill="#3b3b3b"/></svg></span>event origin <a class="lk">https://code.juejin.cn</a> is different from<br>expected:<a class="lk">https://code.devrank.cn</a></div></div>
<div class="m e"><svg class="ic" style="left:13.500px;top:6.500px" width="18" height="18" viewBox="0 0 18 18"><circle cx="9" cy="9" r="8.800" fill="#dc362e"/><path d="M6.300 6.300L11.700 11.700M11.700 6.300L6.300 11.700" stroke="#fff" stroke-width="1.150" stroke-linecap="butt" fill="none"/></svg><a class="src">8717.da1eadfa.js:1</a><svg class="ic" style="left:821.5px;top:5px" width="18.5" height="18.5" viewBox="0 0 19 19" fill="none" stroke="#2b7cd3" stroke-width="1.500" stroke-linecap="round"><circle cx="8" cy="8" r="6.800"/><path d="M13 13l5 5"/><path d="M8 7.300v3.800" stroke-width="1.400"/><circle cx="8" cy="4.900" r=".500" fill="#2b7cd3" stroke-width=".800"/></svg><div class="tx" style="padding-left:38.7px"><span class="arr"><svg width="8.5" height="11" viewBox="0 0 9 12"><path d="M0.500 0.600v10.800a.500.500 0 0 0 .800.400l7.200-5.400a.500.500 0 0 0 0-.800L1.300.200a.500.500 0 0 0-.800.400z" fill="#3b3b3b"/></svg></span>event origin <a class="lk">https://code.juejin.cn</a> is different from<br>expected:<a class="lk">https://code.devrank.cn</a></div></div>
<div class="m e"><svg class="ic" style="left:13.500px;top:6.500px" width="18" height="18" viewBox="0 0 18 18"><circle cx="9" cy="9" r="8.800" fill="#dc362e"/><path d="M6.300 6.300L11.700 11.700M11.700 6.300L6.300 11.700" stroke="#fff" stroke-width="1.150" stroke-linecap="butt" fill="none"/></svg><a class="src">8717.da1eadfa.js:1</a><svg class="ic" style="left:821.5px;top:5px" width="18.5" height="18.5" viewBox="0 0 19 19" fill="none" stroke="#2b7cd3" stroke-width="1.500" stroke-linecap="round"><circle cx="8" cy="8" r="6.800"/><path d="M13 13l5 5"/><path d="M8 7.300v3.800" stroke-width="1.400"/><circle cx="8" cy="4.900" r=".500" fill="#2b7cd3" stroke-width=".800"/></svg><div class="tx" style="padding-left:38.7px"><span class="arr"><svg width="8.5" height="11" viewBox="0 0 9 12"><path d="M0.500 0.600v10.800a.500.500 0 0 0 .800.400l7.200-5.400a.500.500 0 0 0 0-.800L1.300.200a.500.500 0 0 0-.800.400z" fill="#3b3b3b"/></svg></span>event origin <a class="lk">https://code.juejin.cn</a> is different from<br>expected:<a class="lk">https://code.devrank.cn</a></div></div>
<div class="m e"><svg class="ic" style="left:13.500px;top:6.500px" width="18" height="18" viewBox="0 0 18 18"><circle cx="9" cy="9" r="8.800" fill="#dc362e"/><path d="M6.300 6.300L11.700 11.700M11.700 6.300L6.300 11.700" stroke="#fff" stroke-width="1.150" stroke-linecap="butt" fill="none"/></svg><a class="src">8717.da1eadfa.js:1</a><svg class="ic" style="left:821.5px;top:5px" width="18.5" height="18.5" viewBox="0 0 19 19" fill="none" stroke="#2b7cd3" stroke-width="1.500" stroke-linecap="round"><circle cx="8" cy="8" r="6.800"/><path d="M13 13l5 5"/><path d="M8 7.300v3.800" stroke-width="1.400"/><circle cx="8" cy="4.900" r=".500" fill="#2b7cd3" stroke-width=".800"/></svg><div class="tx" style="padding-left:38.7px"><span class="arr"><svg width="8.5" height="11" viewBox="0 0 9 12"><path d="M0.500 0.600v10.800a.500.500 0 0 0 .800.400l7.200-5.400a.500.500 0 0 0 0-.800L1.300.200a.500.500 0 0 0-.800.400z" fill="#3b3b3b"/></svg></span>event origin <a class="lk">https://code.juejin.cn</a> is different from<br>expected:<a class="lk">https://code.devrank.cn</a></div></div>
<div class="m e"><span class="bd" style="width:32px">11</span><a class="src">8717.da1eadfa.js:1</a><svg class="ic" style="left:821.5px;top:5px" width="18.5" height="18.5" viewBox="0 0 19 19" fill="none" stroke="#2b7cd3" stroke-width="1.500" stroke-linecap="round"><circle cx="8" cy="8" r="6.800"/><path d="M13 13l5 5"/><path d="M8 7.300v3.800" stroke-width="1.400"/><circle cx="8" cy="4.900" r=".500" fill="#2b7cd3" stroke-width=".800"/></svg><div class="tx" style="padding-left:54.6px"><span class="arr"><svg width="8.5" height="11" viewBox="0 0 9 12"><path d="M0.500 0.600v10.800a.500.500 0 0 0 .800.400l7.200-5.400a.500.500 0 0 0 0-.800L1.300.200a.500.500 0 0 0-.800.400z" fill="#3b3b3b"/></svg></span>event origin <a class="lk">https://code.juejin.cn</a> is different<br>from expected:<a class="lk">https://code.devrank.cn</a></div></div>
<div class="m e"><span class="bd" style="width:23px">3</span><a class="src">8717.da1eadfa.js:1</a><svg class="ic" style="left:821.5px;top:5px" width="18.5" height="18.5" viewBox="0 0 19 19" fill="none" stroke="#2b7cd3" stroke-width="1.500" stroke-linecap="round"><circle cx="8" cy="8" r="6.800"/><path d="M13 13l5 5"/><path d="M8 7.300v3.800" stroke-width="1.400"/><circle cx="8" cy="4.900" r=".500" fill="#2b7cd3" stroke-width=".800"/></svg><div class="tx" style="padding-left:45.2px"><span class="arr"><svg width="8.5" height="11" viewBox="0 0 9 12"><path d="M0.500 0.600v10.800a.500.500 0 0 0 .800.400l7.200-5.400a.500.500 0 0 0 0-.800L1.300.200a.500.500 0 0 0-.800.400z" fill="#3b3b3b"/></svg></span>event origin <a class="lk">https://code.juejin.cn</a> is different<br>from expected:<a class="lk">https://code.devrank.cn</a></div></div>
<div class="m e"><span class="bd" style="width:23px">2</span><a class="src">8717.da1eadfa.js:1</a><svg class="ic" style="left:821.5px;top:5px" width="18.5" height="18.5" viewBox="0 0 19 19" fill="none" stroke="#2b7cd3" stroke-width="1.500" stroke-linecap="round"><circle cx="8" cy="8" r="6.800"/><path d="M13 13l5 5"/><path d="M8 7.300v3.800" stroke-width="1.400"/><circle cx="8" cy="4.900" r=".500" fill="#2b7cd3" stroke-width=".800"/></svg><div class="tx" style="padding-left:45.2px"><span class="arr"><svg width="8.5" height="11" viewBox="0 0 9 12"><path d="M0.500 0.600v10.800a.500.500 0 0 0 .800.400l7.200-5.400a.500.500 0 0 0 0-.800L1.300.200a.500.500 0 0 0-.800.400z" fill="#3b3b3b"/></svg></span>event origin <a class="lk">https://code.juejin.cn</a> is different<br>from expected:<a class="lk">https://code.devrank.cn</a></div></div>
<div class="m e"><svg class="ic" style="left:13.500px;top:6.500px" width="18" height="18" viewBox="0 0 18 18"><circle cx="9" cy="9" r="8.800" fill="#dc362e"/><path d="M6.300 6.300L11.700 11.700M11.700 6.300L6.300 11.700" stroke="#fff" stroke-width="1.150" stroke-linecap="butt" fill="none"/></svg><a class="src">8717.da1eadfa.js:1</a><svg class="ic" style="left:821.5px;top:5px" width="18.5" height="18.5" viewBox="0 0 19 19" fill="none" stroke="#2b7cd3" stroke-width="1.500" stroke-linecap="round"><circle cx="8" cy="8" r="6.800"/><path d="M13 13l5 5"/><path d="M8 7.300v3.800" stroke-width="1.400"/><circle cx="8" cy="4.900" r=".500" fill="#2b7cd3" stroke-width=".800"/></svg><div class="tx" style="padding-left:38.7px"><span class="arr"><svg width="8.5" height="11" viewBox="0 0 9 12"><path d="M0.500 0.600v10.800a.500.500 0 0 0 .800.400l7.200-5.400a.500.500 0 0 0 0-.800L1.300.200a.500.500 0 0 0-.800.400z" fill="#3b3b3b"/></svg></span>event origin <a class="lk">https://code.juejin.cn</a> is different from<br>expected:<a class="lk">https://code.devrank.cn</a></div></div>
<div class="m e"><svg class="ic" style="left:13.500px;top:6.500px" width="18" height="18" viewBox="0 0 18 18"><circle cx="9" cy="9" r="8.800" fill="#dc362e"/><path d="M6.300 6.300L11.700 11.700M11.700 6.300L6.300 11.700" stroke="#fff" stroke-width="1.150" stroke-linecap="butt" fill="none"/></svg><a class="src">preview:1</a><svg class="ic" style="left:821.5px;top:5px" width="18.5" height="18.5" viewBox="0 0 19 19" fill="none" stroke="#2b7cd3" stroke-width="1.500" stroke-linecap="round"><circle cx="8" cy="8" r="6.800"/><path d="M13 13l5 5"/><path d="M8 7.300v3.800" stroke-width="1.400"/><circle cx="8" cy="4.900" r=".500" fill="#2b7cd3" stroke-width=".800"/></svg><div class="tx" style="padding-left:38.7px">Access to script at '<a class="lk">https://pdn.zijieapi.com/esm/bv/vue@latest</a>'<br>from origin '<a class="lk">https://code.devrank.cn</a>' has been blocked by CORS policy: No<br>'Access-Control-Allow-Origin' header is present on the requested resource.</div></div>
<div class="m e"><svg class="ic" style="left:13.500px;top:6.500px" width="18" height="18" viewBox="0 0 18 18"><circle cx="9" cy="9" r="8.800" fill="#dc362e"/><path d="M6.300 6.300L11.700 11.700M11.700 6.300L6.300 11.700" stroke="#fff" stroke-width="1.150" stroke-linecap="butt" fill="none"/></svg><svg class="ic net" style="left:785px;top:5.500px" width="21" height="21" viewBox="0 0 20 20" fill="none" stroke="#e5722a" stroke-width="1.400" stroke-linecap="round" stroke-linejoin="round"><circle cx="10" cy="10" r="9"/><path d="M7.300 5.500v8.500M7.300 14l-2.300-2.500M7.300 14l2.300-2.500M12.700 14.500V6M12.700 6l-2.300 2.500M12.700 6l2.300 2.500"/></svg><a class="src wn">vue@latest:1</a><svg class="ic" style="left:821.5px;top:5px" width="18.5" height="18.5" viewBox="0 0 19 19" fill="none" stroke="#2b7cd3" stroke-width="1.500" stroke-linecap="round"><circle cx="8" cy="8" r="6.800"/><path d="M13 13l5 5"/><path d="M8 7.300v3.800" stroke-width="1.400"/><circle cx="8" cy="4.900" r=".500" fill="#2b7cd3" stroke-width=".800"/></svg><div class="tx" style="padding-left:38.7px">Failed to load resource: net::ERR_FAILED</div></div>
<div class="m e"><svg class="ic" style="left:13.500px;top:6.500px" width="18" height="18" viewBox="0 0 18 18"><circle cx="9" cy="9" r="8.800" fill="#dc362e"/><path d="M6.300 6.300L11.700 11.700M11.700 6.300L6.300 11.700" stroke="#fff" stroke-width="1.150" stroke-linecap="butt" fill="none"/></svg><a class="src">8717.da1eadfa.js:1</a><svg class="ic" style="left:821.5px;top:5px" width="18.5" height="18.5" viewBox="0 0 19 19" fill="none" stroke="#2b7cd3" stroke-width="1.500" stroke-linecap="round"><circle cx="8" cy="8" r="6.800"/><path d="M13 13l5 5"/><path d="M8 7.300v3.800" stroke-width="1.400"/><circle cx="8" cy="4.900" r=".500" fill="#2b7cd3" stroke-width=".800"/></svg><div class="tx" style="padding-left:38.7px"><span class="arr"><svg width="8.5" height="11" viewBox="0 0 9 12"><path d="M0.500 0.600v10.800a.500.500 0 0 0 .800.400l7.200-5.400a.500.500 0 0 0 0-.800L1.300.200a.500.500 0 0 0-.800.400z" fill="#3b3b3b"/></svg></span>event origin <a class="lk">https://code.juejin.cn</a> is different from<br>expected:<a class="lk">https://code.devrank.cn</a></div></div></div>
<svg class="abs" style="left:19.5px;top:1123px" width="11" height="17" viewBox="0 0 11 17" fill="none" stroke="#2b6cd6" stroke-width="2" stroke-linecap="round" stroke-linejoin="round"><path d="M1.500 1.500l7.500 7-7.500 7"/></svg>
</div><div id="csb">
  <svg class="abs" style="left:3px;top:9px" width="16" height="12" viewBox="0 0 16 12"><path d="M8 0.800L15.300 10.500a.800.800 0 0 1-.700 1.300H1.400a.800.800 0 0 1-.700-1.300z" fill="#8b8b8b"/></svg>
  <div class="abs" style="left:3px;top:108px;width:16px;height:1038px;border-radius:8px;background:#8b8b8b"></div>
  <svg class="abs" style="left:3px;top:1159px" width="16" height="12" viewBox="0 0 16 12"><path d="M8 11.200L15.300 1.500a.800.800 0 0 0-.700-1.300H1.400a.800.800 0 0 0-.700 1.300z" fill="#8b8b8b"/></svg>
</div>
<div id="drawer" class="sans">
  <div class="abs" style="left:12px;top:3px;width:88px;height:45px;background:#fff;border-radius:6px"></div>
  <div class="dtab" style="left:26.500px;color:#2a6bc7">控制台</div>
  <div class="dtab" style="left:114px">问题</div>
  <div class="dtab" style="left:183px">网络请求阻止</div>
  <div class="dtab" style="left:328.5px">自动填充</div>
  <svg class="abs" style="left:433px;top:14px" width="22" height="22" viewBox="0 0 22 22" stroke="#444" stroke-width="1.600" stroke-linecap="round"><path d="M11 1v20M1 11h20"/></svg>
  <svg class="abs" style="left:830px;top:12px" width="30" height="26" viewBox="0 0 30 26" fill="none" stroke="#666" stroke-width="1.700" stroke-linecap="round" stroke-linejoin="round"><rect x="10" y="10" width="17" height="13" rx="2.500"/><path d="M14 6.500h9"/><path d="M6.500 7a6 6 0 0 0-1 9M2.500 14.500l3 1.700 1-3.200"/></svg>
  <svg class="abs" style="left:881.5px;top:17px" width="26" height="20" viewBox="0 0 28 22" fill="none" stroke="#b9b9b9" stroke-width="1.700" stroke-linecap="round" stroke-linejoin="round"><rect x="1" y="1" width="25.500" height="19.500" rx="3"/><path d="M1 13.500h25.500M13.700 10.500V5M11 7.300L13.700 4.600l2.700 2.700"/></svg>
</div>
<!-- IME bar -->
<div class="abs sans" style="left:568px;top:1240.5px;width:268px;height:44.5px;background:#1f1f1f;border-radius:3px 7px 4px 4px"></div>
<svg class="abs" style="left:520px;top:1228px" width="66" height="62" viewBox="0 0 66 62"><defs><linearGradient id="sg" x1="0" y1="0" x2="0.3" y2="1"><stop offset="0" stop-color="#f4702e"/><stop offset="1" stop-color="#ee4c18"/></linearGradient></defs><g transform="rotate(-14 33 31)"><rect x="9.5" y="8.5" width="45" height="45" rx="6.5" fill="url(#sg)"/><text x="32" y="47.5" text-anchor="middle" font-family="Liberation Sans, sans-serif" font-weight="bold" font-style="italic" font-size="45" fill="#fff" transform="translate(32 0) scale(1.22 1) translate(-32 0)">S</text></g></svg>
<div class="abs sans" style="left:591.5px;top:1248px;font-size:25px;line-height:32px;font-weight:bold;color:#f2f2f2">英</div>
<svg class="abs" style="left:637px;top:1254px" width="22" height="24" viewBox="0 0 22 24" fill="#f2f2f2"><circle cx="4.5" cy="4.7" r="3.1"/><path d="M14.2 8.5a2.600 2.600 0 0 1 2.600 2.600c0 3.400-1.500 6.500-3.300 8.700l-1.500-.800c1.100-1.800 1.600-3.600 1.400-5.300a2.600 2.600 0 0 1 .8-5.200z"/></svg>
<svg class="abs" style="left:677px;top:1249.5px" width="23" height="32" viewBox="0 0 23 32"><rect x="6.700" y="0" width="9.600" height="17.500" rx="4.800" fill="#f2f2f2"/><path d="M2 13a9.500 9.500 0 0 0 19 0M11.500 23v5M5.500 28.500h12" fill="none" stroke="#f2f2f2" stroke-width="2.600" stroke-linecap="round"/></svg>
<svg class="abs" style="left:718px;top:1252.5px" width="27" height="22" viewBox="0 0 27 22"><rect x="1.500" y="1.500" width="24" height="18.500" rx="2.500" fill="none" stroke="#f2f2f2" stroke-width="3"/><path d="M1.500 7.300h24M1.500 12.300h24M7.600 1.500v11M13.500 1.500v11M19.400 1.500v11" stroke="#f2f2f2" stroke-width="1.700"/><path d="M7 16.200h13" stroke="#1f1f1f" stroke-width="1.600"/></svg>
<svg class="abs" style="left:759px;top:1250.5px" width="28" height="26" viewBox="0 0 28 26"><path d="M8.500 0.500h3.500c.500 1.800 3.500 1.800 4 0h3.500l8 5-3 5.500-3.500-1.800V25.500h-14V9.200l-3.500 1.800-3-5.500z" fill="#f2f2f2"/></svg>
<svg class="abs" style="left:803.500px;top:1252.500px" width="23" height="24" viewBox="0 0 23 24" fill="#f2f2f2"><rect x="0" y="0" width="10" height="10.500" rx="2.300"/><rect x="0" y="13" width="10" height="10.500" rx="2.300"/><rect x="12.800" y="13" width="10" height="10.500" rx="2.300"/><rect x="12.600" y="0" width="10.300" height="10.500" rx="3"/><rect x="16" y="3.400" width="3.500" height="3.500" rx=".8" fill="#1f1f1f"/></svg>
<!-- watermark -->
<div class="abs sans" style="left:660.5px;top:1269px;font-size:24.7px;line-height:34px;color:#fff;white-space:nowrap;text-shadow:0 0 1.5px #444,1px 1px 1px #666,-1px -1px 1px #777,1px -1px 1px #777,-1px 1px 1px #666;z-index:9">掘金技术社区 @ Bao</div>

</div>
<div id="blk"></div>
</body>
</html>
